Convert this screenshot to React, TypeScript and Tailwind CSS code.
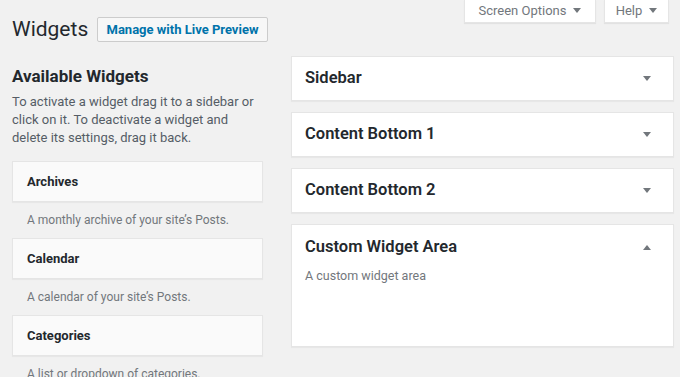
const font = { fontFamily: 'Roboto, "Noto Sans", sans-serif' };

function Caret({ up = false }: { up?: boolean }) {
  return (
    <svg width="8" height="6" viewBox="0 0 8 6" className="text-[#72777c]">
      {up ? <path d="M0 6 L4 1 L8 6 Z" fill="currentColor" /> : <path d="M0 0 L8 0 L4 5 Z" fill="currentColor" />}
    </svg>
  );
}

const available = [
  { name: 'Archives', desc: 'A monthly archive of your site\u2019s Posts.' },
  { name: 'Calendar', desc: 'A calendar of your site\u2019s Posts.' },
  { name: 'Categories', desc: 'A list or dropdown of categories.' },
];

const areas = ['Sidebar', 'Content Bottom 1', 'Content Bottom 2'];

export default function App() {
  return (
    <div className="relative h-[377px] w-[680px] overflow-hidden bg-[#f1f1f1] text-[#23282d]" style={font}>
      {/* screen meta tabs */}
      <div className="absolute right-[11px] top-0 flex gap-2">
        <div className="flex h-[23px] w-[132px] items-center justify-center gap-[7px] border border-t-0 border-[#e5e5e5] bg-white text-[13px] text-[#72777c] shadow-[0_1px_1px_rgba(0,0,0,0.06)]">
          Screen Options <Caret />
        </div>
        <div className="flex h-[23px] w-[65px] items-center justify-center gap-[7px] border border-t-0 border-[#e5e5e5] bg-white text-[13px] text-[#72777c] shadow-[0_1px_1px_rgba(0,0,0,0.06)]">
          Help <Caret />
        </div>
      </div>

      <div className="flex gap-[28px] pl-[12px] pr-[6px]">
        {/* left column */}
        <div className="w-[251px] shrink-0">
          <div className="flex items-center gap-[9px] pt-[17px]">
            <h1 className="w-[76px] whitespace-nowrap text-[21px] leading-[25px] font-normal">Widgets</h1>
            <div className="flex h-[25px] w-[171px] shrink-0 items-center justify-center whitespace-nowrap rounded-[2px] border border-[#ccc] bg-[#f7f7f7] text-[13px] font-bold text-[#0073aa]">
              Manage with Live Preview
            </div>
          </div>
          <h2 className="mt-[24px] text-[17px] leading-[20px] font-bold">Available Widgets</h2>
          <p className="mt-[7px] text-[13px] leading-[18px] text-[#555d66]">
            To activate a widget drag it to a sidebar or click on it. To deactivate a widget and delete its settings, drag it back.
          </p>
          <div className="mt-[14px] flex flex-col">
            {available.map((w) => (
              <div key={w.name}>
                <div className="flex h-[41px] items-center border border-[#e5e5e5] bg-[#fafafa] px-[14px] text-[13px] font-bold shadow-[0_1px_1px_rgba(0,0,0,0.04)]">
                  {w.name}
                </div>
                <p className="px-[15px] pt-[9px] pb-[9px] text-[12px] leading-[18px] text-[#72777c]">{w.desc}</p>
              </div>
            ))}
          </div>
        </div>

        {/* right column */}
        <div className="flex w-[383px] flex-col gap-[11px] pt-[56px]">
          {areas.map((a) => (
            <div
              key={a}
              className="flex h-[45px] items-center justify-between border border-[#e5e5e5] bg-white pl-[13px] pr-[22px] shadow-[0_1px_1px_rgba(0,0,0,0.04)]"
            >
              <span className="text-[16.5px] font-semibold">{a}</span>
              <Caret />
            </div>
          ))}
          <div className="h-[123px] border border-[#e5e5e5] bg-white pl-[13px] pr-[22px] shadow-[0_1px_1px_rgba(0,0,0,0.04)]">
            <div className="flex h-[44px] items-center justify-between">
              <span className="text-[16.5px] font-semibold">Custom Widget Area</span>
              <Caret up />
            </div>
            <p className="text-[12.5px] leading-[14px] text-[#72777c]">A custom widget area</p>
          </div>
        </div>
      </div>
    </div>
  );
}
